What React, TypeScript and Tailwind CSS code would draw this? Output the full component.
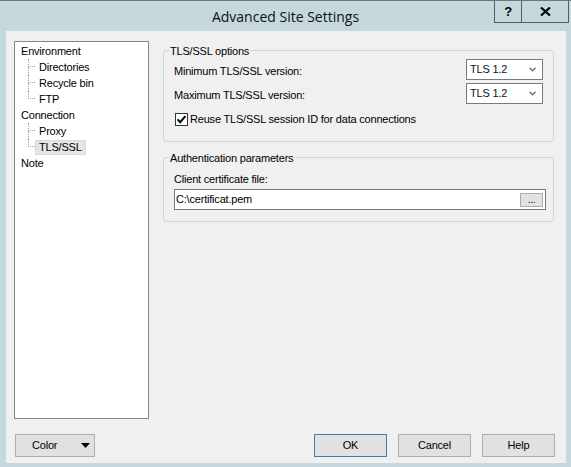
import React from 'react'

const tree = [
  { label: 'Environment', children: ['Directories', 'Recycle bin', 'FTP'] },
  { label: 'Connection', children: ['Proxy', 'TLS/SSL'] },
  { label: 'Note', children: [] as string[] },
]

const selected = 'TLS/SSL'

function Chevron() {
  return (
    <svg width="7" height="5" viewBox="0 0 7 5" className="mr-[6px]">
      <path d="M0.5 0.8 L3.5 3.8 L6.5 0.8" fill="none" stroke="#707070" strokeWidth="1.4" />
    </svg>
  )
}

function Select({ value }: { value: string }) {
  return (
    <div className="flex h-[21px] w-[77px] items-center justify-between border border-[#7a7a7a] bg-white pl-[3px]">
      <span className="text-[#101020]">{value}</span>
      <Chevron />
    </div>
  )
}

function Button({ label, primary }: { label: string; primary?: boolean }) {
  return (
    <button
      className={
        'flex h-[23px] w-[73px] items-center justify-center border bg-[#e1e1e1] ' +
        (primary ? 'border-[#3c7fb1]' : 'border-[#adadad]')
      }
    >
      {label}
    </button>
  )
}

function Group({ title, className, children }: { title: string; className?: string; children: React.ReactNode }) {
  return (
    <div className={'flex flex-col rounded-[3px] border border-[#d5d5d5] ' + (className ?? '')}>
      <span className="-mt-[7px] ml-[5px] self-start bg-[#f0f0f0] px-[1px] leading-[14px]">{title}</span>
      {children}
    </div>
  )
}

export default function App() {
  return (
    <div className="flex h-[467px] w-[571px] flex-col border-t border-[#6e7679] bg-[#c4d8de] font-['Liberation_Sans',Arial,sans-serif] text-[11px] tracking-[-0.2px] text-black">
      {/* Title bar */}
      <div className="grid h-[30px] shrink-0 grid-cols-[1fr_auto_1fr]">
        <div />
        <div className="flex items-center font-['Open_Sans',sans-serif] text-[14px] tracking-normal text-[#111]">
          Advanced Site Settings
        </div>
        <div className="flex items-start justify-end pr-[2px]">
          <div className="flex h-[22px] w-[28px] items-center justify-center border-x border-b border-[#5a5a5a] text-[13px] font-bold">
            ?
          </div>
          <div className="flex h-[22px] w-[47px] items-center justify-center border-r border-b border-[#5a5a5a]">
            <svg width="11" height="9" viewBox="0 0 11 9">
              <path d="M1 0.5 L10 8.5 M10 0.5 L1 8.5" stroke="#000" strokeWidth="2.2" />
            </svg>
          </div>
        </div>
      </div>

      {/* Client area */}
      <div className="ml-[6px] mr-[5px] mb-[4px] flex flex-1 flex-col bg-[#f0f0f0] pt-[10px] pb-[6px]">
        <div className="flex items-start">
          {/* Tree */}
          <div className="ml-[8px] h-[378px] w-[135px] border border-[#828790] bg-white pt-[1px] pl-[6px]">
            {tree.map((node) => (
              <div key={node.label}>
                <div className="flex h-[16px] items-center">{node.label}</div>
                {node.children.map((c, i) => {
                  const last = i === node.children.length - 1
                  const sel = c === selected
                  return (
                    <div key={c} className="flex h-[16px] pl-[7px]">
                      <div className="flex w-[7px] flex-col">
                        <div className="h-[8px] border-b border-l border-dotted border-[#a0a0a0]" />
                        <div className={'flex-1 ' + (last ? '' : 'border-l border-dotted border-[#a0a0a0]')} />
                      </div>
                      <span
                        className={
                          'mt-[1px] flex h-[15px] items-center border px-[3px] ' +
                          (sel ? 'border-[#dadada] bg-[#e5e5e5]' : 'border-transparent')
                        }
                      >
                        {c}
                      </span>
                    </div>
                  )
                })}
              </div>
            ))}
          </div>

          {/* Settings */}
          <div className="ml-[14px] mt-[9px] flex w-[391px] flex-col">
            <Group title="TLS/SSL options" className="pb-[15px]">
              <div className="flex flex-col px-[10px]">
                <div className="mt-[1px] flex items-start justify-between">
                  <span className="mt-[5px] leading-[14px]">Minimum TLS/SSL version:</span>
                  <Select value="TLS 1.2" />
                </div>
                <div className="mt-[3px] flex items-start justify-between">
                  <span className="mt-[5px] leading-[14px]">Maximum TLS/SSL version:</span>
                  <Select value="TLS 1.2" />
                </div>
                <div className="mt-[8px] flex h-[14px] items-center">
                  <svg width="13" height="13" viewBox="0 0 13 13" className="ml-[1px]">
                    <rect x="0.5" y="0.5" width="12" height="12" fill="#fff" stroke="#333" />
                    <path d="M2.6 6.4 L5.2 9.2 L10.4 3.2" fill="none" stroke="#000" strokeWidth="2" />
                  </svg>
                  <span className="ml-[2px]">Reuse TLS/SSL session ID for data connections</span>
                </div>
              </div>
            </Group>

            <Group title="Authentication parameters" className="mt-[15px] pb-[11px]">
              <div className="flex flex-col px-[10px]">
                <span className="mt-[7px] leading-[14px]">Client certificate file:</span>
                <div className="mt-[3px] flex h-[21px] w-[372px] items-center justify-between border border-[#7a7a7a] bg-white pl-[1px] pr-[2px]">
                  <span>C:\certificat.pem</span>
                  <div className="flex h-[14px] w-[23px] items-end justify-center border border-[#adadad] bg-[#e1e1e1] text-[10px] leading-[12px]">
                    ...
                  </div>
                </div>
              </div>
            </Group>
          </div>
        </div>

        {/* Bottom buttons */}
        <div className="mt-[15px] flex items-center pl-[9px] pr-[11px]">
          <button className="flex h-[23px] w-[80px] items-center border border-[#adadad] bg-[#e1e1e1] pl-[16px] pr-[4px]">
            <span>Color</span>
            <svg width="9" height="5" viewBox="0 0 9 5" className="ml-auto">
              <path d="M0 0 L9 0 L4.5 5 Z" fill="#000" />
            </svg>
          </button>
          <div className="ml-auto flex gap-[11px]">
            <Button label="OK" primary />
            <Button label="Cancel" />
            <Button label="Help" />
          </div>
        </div>
      </div>
    </div>
  )
}
